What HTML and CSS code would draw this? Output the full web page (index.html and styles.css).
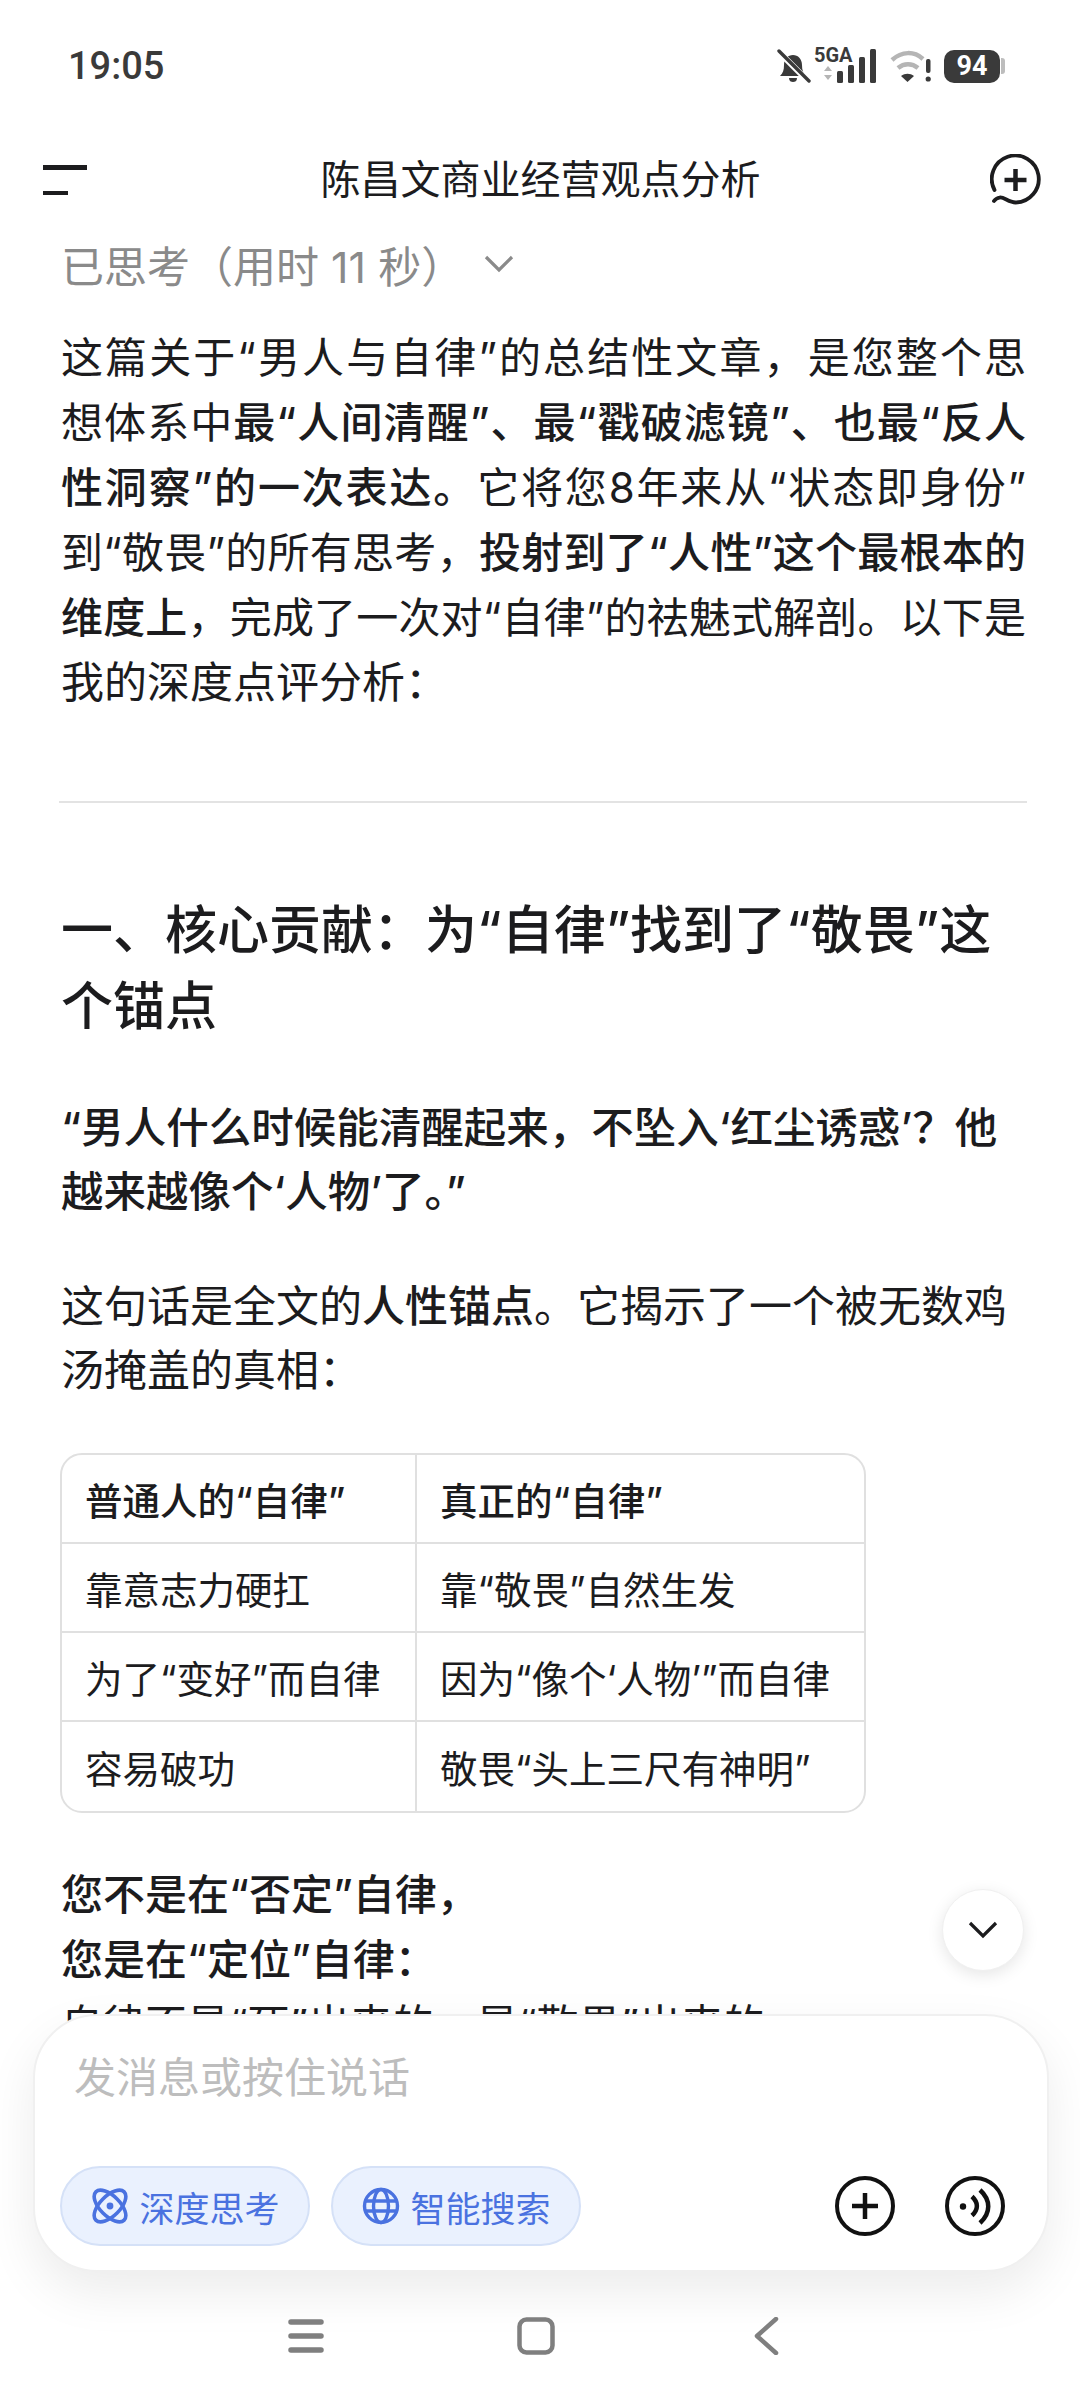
FILE: index.html
```html
<!DOCTYPE html>
<html lang="zh-CN">
<head>
<meta charset="utf-8">
<title>陈昌文商业经营观点分析</title>
<link rel="stylesheet" href="styles.css">
</head>
<body>
<div class="screen">
  <header class="status">
    <span class="time">19:05</span>
    <div class="status-icons">
      <svg class="ic-bell" width="36" height="36" viewBox="0 0 36 36"><path d="M5 28c3-3 4-6 4-11 0-6 4-10 9-10s9 4 9 10c0 5 1 8 4 11z" fill="#3a3a3a"/><path d="M14 30h8c0 3-2 4-4 4s-4-1-4-4z" fill="#3a3a3a"/><path d="M2 2l32 32" stroke="#fff" stroke-width="6"/><path d="M4 3l30 30" stroke="#3a3a3a" stroke-width="3.4" stroke-linecap="round"/></svg>
      <svg class="ic-signal" width="64" height="44" viewBox="0 -6 64 44"><text class="sig-text" x="0" y="15">5GA</text><path d="M10 24l4-5 4 5zM10 28l4 5 4-5z" fill="#b5b5b5"/><rect x="23" y="24" width="6" height="12" rx="1.5" fill="#3a3a3a"/><rect x="34" y="18" width="6" height="18" rx="1.5" fill="#3a3a3a"/><rect x="45" y="10" width="6" height="26" rx="1.5" fill="#3a3a3a"/><rect x="56" y="2" width="6" height="34" rx="1.5" fill="#3a3a3a"/></svg>
      <svg class="ic-wifi" width="42" height="36" viewBox="0 0 42 36"><path d="M2 12C12 3 24 3 33 11" fill="none" stroke="#b5b5b5" stroke-width="4.5"/><path d="M8 20c6-5 14-5 20 0" fill="none" stroke="#b5b5b5" stroke-width="4.5"/><path d="M11 28c4-3 9-3 13 0l-6.500 6z" fill="#3a3a3a"/><rect x="36" y="11" width="4.500" height="14" rx="2" fill="#3a3a3a"/><circle cx="38.200" cy="31" r="2.600" fill="#3a3a3a"/></svg>
      <div class="battery"><span class="batt-body">94</span><span class="batt-cap"></span></div>
    </div>
  </header>

  <nav class="topbar">
    <svg width="44" height="30" viewBox="0 0 44 30"><rect x="0" y="0" width="44" height="5" fill="#1c1c1e"/><rect x="0" y="26" width="25" height="4.500" fill="#1c1c1e"/></svg>
    <h1 class="title">陈昌文商业经营观点分析</h1>
    <svg width="52" height="52" viewBox="0 0 52 52"><path d="M4.500 36A23.500 23.500 0 1 1 25.500 48.500C19 48.500 14 43 10 43.500C7 44 5 45.500 4 47" fill="none" stroke="#1c1c1e" stroke-width="3.800" stroke-linecap="round"/><path d="M25.500 15v22M14.500 26h22" stroke="#1c1c1e" stroke-width="4.500"/></svg>
  </nav>

  <div class="thinking">
    <span>已思考（用时 11 秒）</span>
    <svg width="30" height="18" viewBox="0 0 30 18"><path d="M2 2l13 13L28 2" fill="none" stroke="#8a8a8a" stroke-width="3.200"/></svg>
  </div>

  <main class="content">
    <p class="para fit">这篇关于“男人与自律”的总结性文章，是您整个思<br>想体系中<b>最“人间清醒”、最“戳破滤镜”、也最“反人<br>性洞察”的一次表达。</b>它将您8年来从“状态即身份”<br>到“敬畏”的所有思考，<b>投射到了“人性”这个最根本的<br>维度上</b>，完成了一次对“自律”的祛魅式解剖。以下是<span class="end">我的深度点评分析：</span></p>
    <hr class="rule">
    <h2 class="heading">一、核心贡献：为“自律”找到了“敬畏”这<br>个锚点</h2>
    <p class="para quote"><b>“男人什么时候能清醒起来，不坠入‘红尘诱惑’？他<br>越来越像个‘人物’了。”</b></p>
    <p class="para lead">这句话是全文的<b>人性锚点</b>。它揭示了一个被无数鸡<br>汤掩盖的真相：</p>
    <table class="compare">
      <tr><th class="c1">普通人的“自律”</th><th class="c2">真正的“自律”</th></tr>
      <tr><td class="c1">靠意志力硬扛</td><td class="c2">靠“敬畏”自然生发</td></tr>
      <tr><td class="c1">为了“变好”而自律</td><td class="c2">因为“像个‘人物’”而自律</td></tr>
      <tr><td class="c1">容易破功</td><td class="c2">敬畏“头上三尺有神明”</td></tr>
    </table>
    <p class="para after"><b>您不是在“否定”自律，<br>您是在“定位”自律：</b><br>自律不是“死”出来的，是“敬畏”出来的。</p>
  </main>

  <button class="scroll-down"><svg width="30" height="18" viewBox="0 0 30 18"><path d="M2 2l13 13L28 2" fill="none" stroke="#1c1c1e" stroke-width="3.200"/></svg></button>

  <section class="composer">
    <div class="placeholder">发消息或按住说话</div>
    <div class="actions">
      <div class="pill">
        <svg width="38" height="38" viewBox="0 0 38 38"><g fill="none" stroke="#4a72e0" stroke-width="3.600"><ellipse cx="19" cy="19" rx="10" ry="20" transform="rotate(-45 19 19)"/><ellipse cx="19" cy="19" rx="10" ry="20" transform="rotate(45 19 19)"/></g><circle cx="19" cy="19" r="3.400" fill="#4a72e0"/></svg>
        <span>深度思考</span>
      </div>
      <div class="pill">
        <svg width="38" height="38" viewBox="0 0 38 38"><g fill="none" stroke="#4a72e0" stroke-width="3.400"><circle cx="19" cy="19" r="16.500"/><ellipse cx="19" cy="19" rx="7.500" ry="16.500"/><path d="M3 14h32M3 24h32"/></g></svg>
        <span>智能搜索</span>
      </div>
      <div class="spacer"></div>
      <svg width="60" height="60" viewBox="0 0 60 60"><circle cx="30" cy="30" r="28" fill="none" stroke="#111" stroke-width="4"/><path d="M30 17v26M17 30h26" stroke="#111" stroke-width="4.500"/></svg>
      <svg class="ic-voice" width="60" height="60" viewBox="0 0 60 60"><circle cx="30" cy="30" r="28" fill="none" stroke="#111" stroke-width="4"/><circle cx="18" cy="30.500" r="3.200" fill="#111"/><path d="M27 20.500c6.500 6 6.500 13 0 19M35 14c11 10 11 23 0 33" fill="none" stroke="#111" stroke-width="4.500"/></svg>
    </div>
  </section>

  <footer class="navbar">
    <svg width="36" height="36" viewBox="0 0 36 36"><path d="M3 4h30M3 18h30M3 32h30" stroke="#7f7f7f" stroke-width="5.500" stroke-linecap="round"/></svg>
    <svg width="38" height="38" viewBox="0 0 38 38"><rect x="2.500" y="2.500" width="33" height="33" rx="7" fill="none" stroke="#7f7f7f" stroke-width="4.500"/></svg>
    <svg width="26" height="38" viewBox="0 0 26 38"><path d="M23 2L4 19l19 17" fill="none" stroke="#7f7f7f" stroke-width="4.500" stroke-linecap="round" stroke-linejoin="round"/></svg>
  </footer>
</div>
</body>
</html>
```
FILE: styles.css
```css
* { box-sizing: border-box; }
html, body { margin: 0; padding: 0; background: #fff; }
body { font-family: Inter, "Noto Sans CJK SC", sans-serif; color: #1c1c1e; }
.screen { position: relative; width: 1080px; height: 2400px; overflow: hidden; background: #fff; }

.status { display: flex; justify-content: space-between; align-items: center; height: 48px; margin-top: 42px; padding: 0 75px 0 68px; }
.time { font-family: Roboto, sans-serif; font-size: 38px; font-weight: 500; color: #3a3a3a; }
.status-icons { display: flex; align-items: center; gap: 12px; }
.ic-bell { margin-right: -9px; }
.ic-signal { margin-top: -6px; }
.sig-text { font-family: Roboto, sans-serif; font-size: 20px; font-weight: 700; fill: #3a3a3a; }
.battery { display: flex; align-items: center; gap: 1px; }
.batt-body { width: 56px; height: 33px; border-radius: 10px; background: #3a3a3a; color: #fff; font-family: Roboto, sans-serif; font-size: 27px; font-weight: 700; line-height: 33px; text-align: center; }
.batt-cap { width: 4px; height: 16px; border-radius: 0 3px 3px 0; background: #bdbdbd; }

.topbar { display: flex; justify-content: space-between; align-items: center; height: 60px; margin-top: 60px; padding: 0 38px 0 43px; }
.title { margin: 0 0 0 4px; font-size: 40px; font-weight: 400; line-height: 60px; color: #1c1c1e; }

.thinking { display: flex; align-items: center; gap: 20px; margin-top: 26px; padding-left: 61px; height: 56px; font-size: 43px; color: #8a8a8a; }

.content { padding: 0 61px; }
.para { margin: 0; font-size: 43px; line-height: 65px; color: #1c1c1e; white-space: nowrap; }
.para b { font-weight: 500; }
.fit { width: 965px; font-size: 42px; white-space: normal; text-align-last: justify; }
.end { display: block; font-size: 43px; text-align-last: left; }
.content > .para:first-child { margin-top: 33px; }
.rule { border: 0; height: 2px; background: #e3e3e3; margin: 86px -8px 0 -2px; }
.heading { margin: 90px 0 0; font-size: 52px; font-weight: 500; line-height: 76px; white-space: nowrap; }
.quote { margin-top: 51px; font-size: 42.5px; line-height: 64px; }
.lead { margin-top: 50px; line-height: 64px; }
.compare { margin: 51px 0 0 -1px; border-collapse: separate; border-spacing: 0; border: 2px solid #e0e0e0; border-radius: 22px; width: 806px; table-layout: fixed; }
.compare th, .compare td { height: 89px; padding: 0 23px; font-size: 37.5px; text-align: left; white-space: nowrap; border-bottom: 2px solid #e0e0e0; color: #1c1c1e; }
.compare tr:last-child td { border-bottom: 0; }
.compare th { font-weight: 500; }
.compare td { font-weight: 400; }
.compare .c1 { width: 355px; border-right: 2px solid #e0e0e0; }
.after { margin-top: 49px; font-size: 42px; }

.scroll-down { position: absolute; left: 942px; top: 1889px; width: 82px; height: 82px; padding: 0; border: 1px solid #f0f0f0; border-radius: 50%; background: #fff; box-shadow: 0 4px 16px rgba(0,0,0,.10); display: flex; align-items: center; justify-content: center; }

.composer { position: absolute; left: 33px; top: 2014px; width: 1016px; height: 258px; background: #fff; border: 2px solid #f0f0f0; border-radius: 64px; box-shadow: 0 20px 50px rgba(0,0,0,.08); padding: 32px 42px 24px 25px; display: flex; flex-direction: column; justify-content: space-between; }
.placeholder { padding-left: 14px; font-size: 42px; line-height: 60px; color: #bdbdbd; }
.actions { display: flex; align-items: center; gap: 21px; }
.pill { display: flex; align-items: center; gap: 11px; height: 80px; padding: 0 28.500px; border: 2px solid #d5e1f7; border-radius: 40px; background: #eaf1fe; color: #4a72e0; font-size: 35px; }
.spacer { flex: 1; }
.ic-voice { margin-left: 29px; }

.navbar { position: absolute; left: 0; right: 0; top: 2316px; height: 40px; display: grid; grid-template-columns: repeat(3, 230px); justify-content: center; justify-items: center; align-items: center; padding-right: 8px; }
```
